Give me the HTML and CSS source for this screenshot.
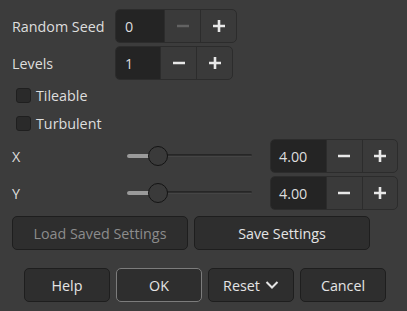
FILE: index.html
```html
<!DOCTYPE html>
<html>
<head>
<meta charset="utf-8">
<link rel="stylesheet" href="styles.css">
</head>
<body>
<div class="dialog">
  <div class="row r-seed">
    <span class="label">Random Seed</span>
    <div class="spin spin-seed">
      <div class="entry">0</div>
      <div class="sbtn disabled"><svg width="14" height="14" viewBox="0 0 14 14"><path d="M1 7H13" /></svg></div>
      <div class="sbtn"><svg width="14" height="14" viewBox="0 0 14 14"><path d="M1 7H13M7 1V13" /></svg></div>
    </div>
  </div>
  <div class="row r-levels">
    <span class="label">Levels</span>
    <div class="spin spin-levels">
      <div class="entry">1</div>
      <div class="sbtn"><svg width="14" height="14" viewBox="0 0 14 14"><path d="M1 7H13" /></svg></div>
      <div class="sbtn"><svg width="14" height="14" viewBox="0 0 14 14"><path d="M1 7H13M7 1V13" /></svg></div>
    </div>
  </div>
  <label class="check"><span class="box"></span><span>Tileable</span></label>
  <label class="check"><span class="box"></span><span>Turbulent</span></label>
  <div class="row r-scale">
    <span class="axis">X</span>
    <div class="slider"><div class="fill"></div><div class="knob"></div></div>
    <div class="spin spin-scale">
      <div class="entry">4.00</div>
      <div class="sbtn"><svg width="14" height="14" viewBox="0 0 14 14"><path d="M1 7H13" /></svg></div>
      <div class="sbtn"><svg width="14" height="14" viewBox="0 0 14 14"><path d="M1 7H13M7 1V13" /></svg></div>
    </div>
  </div>
  <div class="row r-scale r-y">
    <span class="axis">Y</span>
    <div class="slider"><div class="fill"></div><div class="knob"></div></div>
    <div class="spin spin-scale">
      <div class="entry">4.00</div>
      <div class="sbtn"><svg width="14" height="14" viewBox="0 0 14 14"><path d="M1 7H13" /></svg></div>
      <div class="sbtn"><svg width="14" height="14" viewBox="0 0 14 14"><path d="M1 7H13M7 1V13" /></svg></div>
    </div>
  </div>
  <div class="settings">
    <button class="btn wide dim">Load Saved Settings</button>
    <button class="btn wide">Save Settings</button>
  </div>
  <div class="actions">
    <button class="btn act">Help</button>
    <button class="btn act default">OK</button>
    <button class="btn act">Reset <svg class="chev" width="14" height="10" viewBox="0 0 14 10"><path d="M1.5 2L7 7.5L12.5 2" /></svg></button>
    <button class="btn act">Cancel</button>
  </div>
</div>
</body>
</html>
```

FILE: styles.css
```css
html, body {
  margin: 0;
  padding: 0;
  background: #3c3c3c;
}
body {
  font-family: "Open Sans", "Noto Sans", sans-serif;
  font-size: 14.3px;
  color: #dedede;
  width: 407px;
  height: 311px;
  overflow: hidden;
}
.dialog {
  padding: 9px 0 0 12px;
  display: flex;
  flex-direction: column;
}
.row {
  display: flex;
  align-items: center;
  height: 34px;
}
.r-levels { margin-top: 3px; }
.label {
  width: 103px;
  flex: none;
}
.spin {
  display: flex;
  height: 34px;
  box-sizing: border-box;
  border: 1px solid #2c2c2c;
  border-radius: 5px;
  overflow: hidden;
  background: #3a3a3a;
}
.entry {
  background: #242424;
  display: flex;
  align-items: center;
  padding-left: 9px;
  box-sizing: border-box;
  border-right: 1px solid #2c2c2c;
}
.spin-seed .entry { width: 49px; }
.spin-levels .entry { width: 45px; }
.spin-scale .entry { width: 57px; padding-left: 8px; }
.sbtn {
  width: 35px;
  display: flex;
  align-items: center;
  justify-content: center;
  box-sizing: border-box;
}
.sbtn + .sbtn { border-left: 1px solid #2c2c2c; width: 36px; }
.sbtn svg path {
  stroke: #e8e8e8;
  stroke-width: 2.6;
  fill: none;
}
.sbtn.disabled svg path { stroke: #626262; }
.check {
  display: flex;
  align-items: center;
  height: 28px;
  padding-left: 4px;
}
.check:first-of-type { margin-top: 1px; }
.box {
  width: 13px;
  height: 13px;
  border: 1px solid #1f1f1f;
  background: #2a2a2a;
  border-radius: 3px;
  margin-right: 5px;
}
.r-scale { margin-top: 2px; }
.r-y { margin-top: 3px; }
.axis {
  width: 115px;
  flex: none;
}
.slider {
  position: relative;
  width: 125px;
  height: 20px;
  margin-right: 18px;
}
.slider::before {
  content: "";
  position: absolute;
  left: 0;
  right: 0;
  top: 8px;
  height: 3px;
  background: #2e2e2e;
  border-top: 1px solid #262626;
  border-bottom: 1px solid #454545;
  box-sizing: border-box;
  border-radius: 2px;
}
.fill {
  position: absolute;
  left: 0;
  width: 24px;
  top: 8px;
  height: 4px;
  background: #9a9a9a;
  border-radius: 2px;
}
.knob {
  position: absolute;
  left: 21px;
  top: 0;
  width: 18px;
  height: 18px;
  border-radius: 50%;
  background: #3a3a3a;
  border: 1px solid #141414;
}
.spin-scale { width: 128px; }
.settings {
  display: flex;
  gap: 6px;
  margin-top: 6px;
}
.btn {
  font-family: inherit;
  font-size: 14.3px;
  color: #e4e4e4;
  background: #2e2e2e;
  border: 1px solid #1e1e1e;
  border-radius: 5px;
  height: 34px;
  padding: 0;
  display: flex;
  align-items: center;
  justify-content: center;
  box-sizing: border-box;
}
.wide { width: 176px; }
.dim { color: #8c8c8c; }
.actions {
  display: flex;
  gap: 6px;
  margin-top: 18px;
  margin-left: 12px;
}
.act { width: 86px; }
.default { border-color: #7c7c7c; }
.chev { margin-left: 5px; }
.chev path {
  stroke: #e4e4e4;
  stroke-width: 2;
  fill: none;
}
```
